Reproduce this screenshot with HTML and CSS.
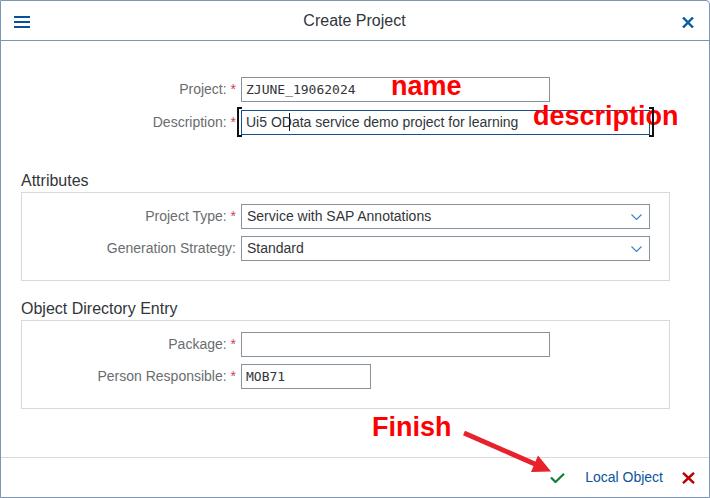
FILE: index.html
```html
<!DOCTYPE html>
<html>
<head>
<meta charset="utf-8">
<link rel="stylesheet" href="styles.css">
</head>
<body>
<div class="dialog">
  <header class="head">
    <svg class="menu" width="16" height="12" viewBox="0 0 16 12"><rect x="0" y="0" width="16" height="2"/><rect x="0" y="5" width="16" height="2"/><rect x="0" y="10" width="16" height="2"/></svg>
    <div class="title">Create Project</div>
    <svg class="close" width="12" height="11" viewBox="0 0 12 11"><path d="M1 0.5 L11 10.5 M11 0.5 L1 10.5"/></svg>
  </header>

  <main class="content">
    <div class="form top">
      <label class="lbl">Project: <span class="req">*</span></label>
      <div class="inp w309 mono">ZJUNE_19062024</div>
      <label class="lbl">Description: <span class="req">*</span></label>
      <div class="inp w409 focus">Ui5 OData service demo project for learning</div>
    </div>

    <h2 class="group-title first">Attributes</h2>
    <div class="box">
      <div class="form inbox">
        <label class="lbl">Project Type: <span class="req">*</span></label>
        <div class="inp w409 select">Service with SAP Annotations<svg class="chev" width="11" height="6" viewBox="0 0 11 6"><path d="M0.5 0.5 L5.5 5.5 L10.5 0.5"/></svg></div>
        <label class="lbl">Generation Strategy:</label>
        <div class="inp w409 select">Standard<svg class="chev" width="11" height="6" viewBox="0 0 11 6"><path d="M0.5 0.5 L5.5 5.5 L10.5 0.5"/></svg></div>
      </div>
    </div>

    <h2 class="group-title">Object Directory Entry</h2>
    <div class="box">
      <div class="form inbox">
        <label class="lbl">Package: <span class="req">*</span></label>
        <div class="inp w309"></div>
        <label class="lbl">Person Responsible: <span class="req">*</span></label>
        <div class="inp w130 mono">MOB71</div>
      </div>
    </div>
  </main>

  <footer class="foot">
    <svg class="ok" width="15" height="10" viewBox="0 0 15 10"><path d="M1 4.5 L5.5 9 L14 0.8"/></svg>
    <span class="local">Local Object</span>
    <svg class="cancel" width="13" height="12" viewBox="0 0 13 12"><path d="M1 0.8 L12 11.2 M12 0.8 L1 11.2"/></svg>
  </footer>
</div>

<div class="note note-name">name</div>
<div class="note note-desc">description</div>
<div class="note note-finish">Finish</div>
<span class="bracket bl"></span>
<span class="bracket br"></span>
<span class="caret"></span>
<svg class="arrow" width="710" height="498" viewBox="0 0 710 498">
  <line x1="464" y1="433" x2="536" y2="464.5" />
  <polygon points="551,471.5 531,472 538,455.5" />
</svg>
</body>
</html>
```

FILE: styles.css
```css
* { box-sizing: border-box; }
html, body { margin: 0; padding: 0; }
body {
  position: relative;
  width: 710px;
  height: 498px;
  font-family: "Liberation Sans", Arial, sans-serif;
  color: #32363a;
  background: #fff;
  overflow: hidden;
}
.dialog {
  width: 710px;
  height: 498px;
  border: 1px solid #7b95b5;
  border-top-right-radius: 4px;
  display: flex;
  flex-direction: column;
  background: #fff;
}
.head {
  height: 40px;
  border-bottom: 1px solid #7b95b5;
  display: flex;
  align-items: center;
  padding: 0 15px 0 13px;
  flex: none;
}
.menu { fill: #0a4f9b; display: block; margin-top: 3px; }
.title {
  flex: 1;
  text-align: center;
  font-size: 16px;
  color: #32363a;
  padding-right: 3px;
  margin-top: 1px;
}
.close { stroke: #0a5aa8; stroke-width: 2.4; fill: none; display: block; margin-top: 3px; }

.content { flex: 1; padding-top: 36px; }

.form {
  display: grid;
  grid-template-columns: 235px auto;
  column-gap: 5px;
  row-gap: 8px;
  justify-items: start;
}
.form.inbox { grid-template-columns: 214px auto; row-gap: 7px; }
.lbl {
  justify-self: end;
  font-size: 14px;
  line-height: 25px;
  color: #6a6d70;
  white-space: nowrap;
}
.req { color: #d0404f; }

.inp {
  height: 25px;
  border: 1px solid #89919a;
  background: #fff;
  font-size: 14px;
  line-height: 23px;
  padding: 0 4px;
  color: #32363a;
  position: relative;
  white-space: nowrap;
}
.inp.mono { font-family: "DejaVu Sans Mono", monospace; font-size: 13px; padding-left: 4px; }
.inp.focus { border-color: #14508e; }
.w309 { width: 309px; }
.w409 { width: 409px; }
.w130 { width: 130px; }
.select { padding-left: 5px; }
.chev {
  position: absolute;
  right: 7px;
  top: 9px;
  stroke: #3d7fc4;
  stroke-width: 1.1;
  fill: none;
}

.group-title {
  margin: 36px 20px 1px;
  font-size: 16px;
  font-weight: normal;
  line-height: 20px;
  color: #32363a;
}
.box {
  margin: 0 39px 0 20px;
  border: 1px solid #d9d9d9;
  padding: 11px 0 19px;
}
.box + .group-title { margin-top: 18px; }

.foot {
  height: 40px;
  flex: none;
  border-top: 1px solid #d9d9d9;
  display: flex;
  align-items: center;
  justify-content: flex-end;
  padding: 0 14px 1px 0;
}
.ok { stroke: #107e3e; stroke-width: 2.2; fill: none; display: block; margin-right: 20px; margin-top: 2px; }
.local { font-size: 14px; color: #0a55a0; margin-right: 19px; }
.cancel { stroke: #bb0000; stroke-width: 2.4; fill: none; display: block; margin-top: 1px; }

.note {
  position: absolute;
  font-family: "Liberation Sans", Arial, sans-serif;
  font-weight: bold;
  font-size: 27px;
  line-height: 27px;
  color: #ff0000;
  white-space: nowrap;
}
.note-name { left: 391px; top: 73px; }
.note-desc { left: 533px; top: 103px; }
.note-finish { left: 372px; top: 414px; }

.bracket {
  position: absolute;
  width: 5px;
  height: 30px;
  top: 107px;
  border: 2px solid #111;
}
.bracket.bl { left: 237px; border-right: none; }
.bracket.br { left: 649px; border-left: none; }
.caret {
  position: absolute;
  left: 289px;
  top: 113px;
  width: 1px;
  height: 18px;
  background: #111;
}
.arrow {
  position: absolute;
  left: 0;
  top: 0;
  pointer-events: none;
}
.arrow line { stroke: #e8222a; stroke-width: 5; }
.arrow polygon { fill: #e8222a; }
```
